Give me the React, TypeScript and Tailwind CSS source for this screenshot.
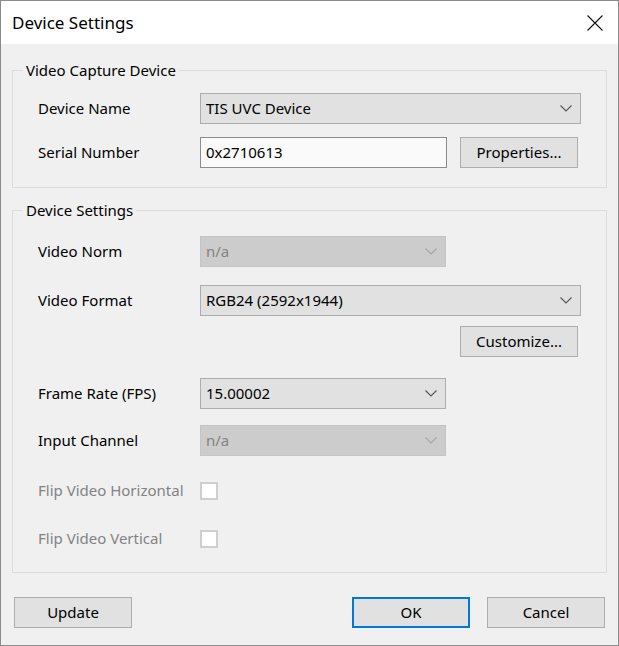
import type { ReactNode } from 'react'

function Chevron({ disabled }: { disabled?: boolean }) {
  return (
    <svg width="12" height="7" viewBox="0 0 12 7" className={disabled ? 'text-[#a6a6a6]' : 'text-[#555555]'}>
      <path d="M0.5 0.5 L6 6 L11.5 0.5" fill="none" stroke="currentColor" strokeWidth="1.1" />
    </svg>
  )
}

function Combo({ value, wide, disabled }: { value: string; wide?: boolean; disabled?: boolean }) {
  return (
    <div
      className={`flex h-[31px] shrink-0 items-center justify-between border pl-[5px] pr-[8px] ${wide ? 'w-[381px]' : 'w-[246px]'} ${
        disabled ? 'border-[#c4c4c4] bg-[#cccccc] text-[#838383]' : 'border-[#adadad] bg-[#e1e1e1] text-black'
      }`}
    >
      <span>{value}</span>
      <Chevron disabled={disabled} />
    </div>
  )
}

function Button({ children, primary }: { children: ReactNode; primary?: boolean }) {
  return (
    <button
      className={`flex h-[31px] w-[118px] shrink-0 items-center justify-center bg-[#e1e1e1] text-black ${
        primary ? 'border-2 border-[#0078d7]' : 'border border-[#adadad]'
      }`}
    >
      {children}
    </button>
  )
}

function Row({ label, muted, children }: { label: string; muted?: boolean; children: ReactNode }) {
  return (
    <div className="flex h-[31px] items-center">
      <span className={`w-[187px] shrink-0 whitespace-nowrap pl-[25px] ${muted ? 'text-[#838383]' : 'text-black'}`}>
        {label}
      </span>
      {children}
    </div>
  )
}

function Group({ title, className, children }: { title: string; className: string; children: ReactNode }) {
  return (
    <div className={`relative mx-[11px] flex flex-col border border-[#dcdcdc] ${className}`}>
      <span className="absolute -top-[11px] left-[10px] bg-[#f0f0f0] px-[3px] leading-[20px] text-black">{title}</span>
      {children}
    </div>
  )
}

function Checkbox() {
  return <div className="h-[18px] w-[18px] shrink-0 border-2 border-[#cfcfcf] bg-white" />
}

export default function App() {
  return (
    <div
      className="flex h-[646px] w-[619px] flex-col border border-[#8a8a8a] bg-[#f0f0f0] text-[15px]"
      style={{ fontFamily: '"Noto Sans", "Open Sans", sans-serif' }}
    >
      {/* Title bar */}
      <div className="flex h-[43px] items-center justify-between bg-white pl-[11px] pr-[15px]">
        <span className="text-[17px] text-black">Device Settings</span>
        <svg width="16" height="16" viewBox="0 0 16 16">
          <path d="M0.5 0.5 L15.5 15.5 M15.5 0.5 L0.5 15.5" stroke="#111" strokeWidth="1.1" />
        </svg>
      </div>

      <Group title="Video Capture Device" className="mt-[26px] h-[118px] gap-[13px] pt-[22px]">
        <Row label="Device Name">
          <Combo value="TIS UVC Device" wide />
        </Row>
        <Row label="Serial Number">
          <div className="flex h-[31px] w-[247px] shrink-0 items-center border border-[#8c8c8c] bg-[#fafafa] pl-[5px] text-black">
            0x2710613
          </div>
          <div className="ml-[13px]">
            <Button>Properties...</Button>
          </div>
        </Row>
      </Group>

      <Group title="Device Settings" className="mt-[22px] h-[363px] pt-[25px]">
        <Row label="Video Norm">
          <Combo value="n/a" disabled />
        </Row>
        <div className="mt-[18px]">
          <Row label="Video Format">
            <Combo value="RGB24 (2592x1944)" wide />
          </Row>
        </div>
        <div className="mt-[10px] flex pl-[447px]">
          <Button>Customize...</Button>
        </div>
        <div className="mt-[21px]">
          <Row label="Frame Rate (FPS)">
            <Combo value="15.00002" />
          </Row>
        </div>
        <div className="mt-[16px]">
          <Row label="Input Channel">
            <Combo value="n/a" disabled />
          </Row>
        </div>
        <div className="mt-[19px]">
          <Row label="Flip Video Horizontal" muted>
            <Checkbox />
          </Row>
        </div>
        <div className="mt-[17px]">
          <Row label="Flip Video Vertical" muted>
            <Checkbox />
          </Row>
        </div>
      </Group>

      {/* Footer buttons */}
      <div className="mt-[24px] flex items-center px-[13px]">
        <Button>Update</Button>
        <div className="ml-auto flex gap-[17px]">
          <Button primary>OK</Button>
          <Button>Cancel</Button>
        </div>
      </div>
    </div>
  )
}
